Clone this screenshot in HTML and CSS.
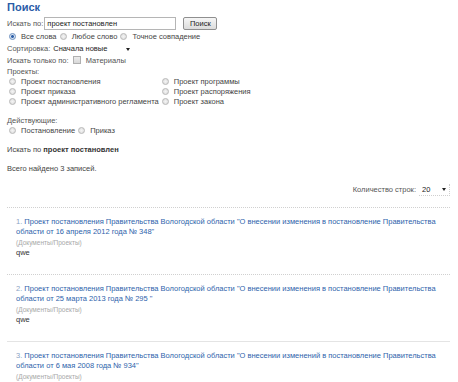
FILE: index.html
```html
<!DOCTYPE html>
<html lang="ru">
<head>
  <meta charset="UTF-8" />
  <title>Поиск</title>
  <link rel="stylesheet" href="styles.css">
</head>
<body>
  <div class="search-page">
    <h1>Поиск</h1>
    <form class="search-form">
      <div class="row first">
        <label class="label" for="q">Искать по:</label>
        <input type="text" id="q" class="query" value="проект постановлен" />
        <button type="button" class="btn">Поиск</button>
      </div>
      <div class="row radios">
        <label><input type="radio" name="mode" checked /> Все слова</label>
        <label><input type="radio" name="mode" /> Любое слово</label>
        <label><input type="radio" name="mode" /> Точное совпадение</label>
      </div>
      <div class="row">
        <span class="label">Сортировка:</span>
        <div class="select sort">Сначала новые <span class="arrow"></span></div>
      </div>
      <div class="row">
        <span class="label">Искать только по:</span>
        <label class="check"><input type="checkbox" /> Материалы</label>
      </div>
      <div class="label">Проекты:</div>
      <div class="projects">
        <label><input type="radio" name="proj" /> Проект постановления</label>
        <label><input type="radio" name="proj" /> Проект программы</label>
        <label><input type="radio" name="proj" /> Проект приказа</label>
        <label><input type="radio" name="proj" /> Проект распоряжения</label>
        <label><input type="radio" name="proj" /> Проект административного регламента</label>
        <label><input type="radio" name="proj" /> Проект закона</label>
      </div>
      <div class="label acting">Действующие:</div>
      <div class="row radios short">
        <label><input type="radio" name="act" /> Постановление</label>
        <label><input type="radio" name="act" /> Приказ</label>
      </div>
    </form>

    <p class="summary">Искать по <b>проект постановлен</b></p>
    <p class="summary">Всего найдено 3 записей.</p>

    <div class="per-page">
      <span>Количество строк:</span>
      <div class="select count">20 <span class="arrow"></span></div>
    </div>

    <ul class="results">
      <li>
        <span class="num">1.</span> <a href="#">Проект постановления Правительства Вологодской области "О внесении изменения в постановление Правительства области от 16 апреля 2012 года № 348"</a>
        <div class="section">(Документы/Проекты)</div>
        <div class="snippet">qwe</div>
      </li>
      <li>
        <span class="num">2.</span> <a href="#">Проект постановления Правительства Вологодской области "О внесении изменения в постановление Правительства области от 25 марта 2013 года № 295 "</a>
        <div class="section">(Документы/Проекты)</div>
        <div class="snippet">qwe</div>
      </li>
      <li>
        <span class="num">3.</span> <a href="#">Проект постановления Правительства Вологодской области "О внесении изменений в постановление Правительства области от 6 мая 2008 года № 934"</a>
        <div class="section">(Документы/Проекты)</div>
      </li>
    </ul>
  </div>
</body>
</html>
```

FILE: styles.css
```css
body {
  margin: 0;
  background-color: #ffffff;
  font-family: 'Liberation Sans', Arial, sans-serif;
  font-size: 7.5px;
  line-height: 10px;
  color: #444444;
}

.search-page {
  padding: 0 8px 0 7px;
}

h1 {
  margin: 0;
  font-size: 11px;
  line-height: 14px;
  font-weight: bold;
  color: #2a5ca8;
}

.search-form {
  margin-top: 2px;
}

.row {
  display: flex;
  align-items: center;
  height: 12px;
}

.row.first {
  height: 15px;
}

.row.short {
  height: 10px;
}

.label {
  color: #555555;
}

.query {
  width: 132px;
  height: 13px;
  box-sizing: border-box;
  margin: 0 7px 0 1px;
  padding: 0 2px;
  border: 1px solid #b5b5b5;
  font-family: inherit;
  font-size: 7.5px;
  color: #222222;
}

.btn {
  height: 13px;
  width: 34px;
  padding: 0;
  border: 1px solid #8f8f8f;
  border-radius: 2px;
  background: linear-gradient(#f6f6f6, #dcdcdc);
  font-family: inherit;
  font-size: 7.5px;
  color: #222222;
}

input[type="radio"] {
  appearance: none;
  width: 7px;
  height: 7px;
  margin: 0 3px 0 2px;
  border: 1px solid #b8b8b8;
  border-radius: 50%;
  background: radial-gradient(#f4f4f4, #dadada);
  vertical-align: -1px;
}

input[type="radio"]:checked {
  border-color: #6b8fc0;
  background: radial-gradient(#2d5fa8 35%, #d9e3f0 45%);
}

input[type="checkbox"] {
  appearance: none;
  width: 8px;
  height: 8px;
  margin: 0 3px 0 2px;
  border: 1px solid #b0b0b0;
  background: linear-gradient(#ececec, #d8d8d8);
  vertical-align: -1px;
}

.radios label {
  margin-right: 1px;
}

.select {
  position: relative;
  display: flex;
  align-items: center;
  height: 11px;
  color: #222222;
}

.sort {
  width: 80px;
  margin-left: 2px;
  padding-left: 1px;
}

.arrow {
  position: absolute;
  right: 3px;
  top: 4px;
  border-left: 2px solid transparent;
  border-right: 2px solid transparent;
  border-top: 3px solid #222222;
}

.check {
  margin-left: 2px;
  color: #555555;
}

.projects {
  display: grid;
  grid-template-columns: auto auto;
  justify-content: start;
  column-gap: 1px;
}

.projects label {
  white-space: nowrap;
}

.acting {
  margin-top: 9px;
}

.summary {
  margin: 9px 0 0 0;
  color: #444444;
}

.summary b {
  color: #333333;
}

.per-page {
  display: flex;
  justify-content: flex-end;
  align-items: center;
  margin-top: 10px;
  color: #555555;
}

.count {
  width: 27px;
  margin-left: 3px;
  padding-left: 3px;
  border-bottom: 1px dotted #cfcfcf;
  border-right: 1px dotted #cfcfcf;
}

.results {
  list-style: none;
  margin: 11px 0 0 0;
  padding: 0;
}

.results li {
  border-top: 1px dotted #d0d0d0;
  padding: 9px 0 16px 9px;
}

.results li:last-child {
  border-top: 1px solid #e4e4e4;
}

.num {
  color: #8aa2c4;
}

.results a {
  color: #2e63ab;
  text-decoration: none;
}

.section {
  color: #a8a8a8;
  font-size: 6.5px;
  line-height: 10px;
  margin-top: 1px;
}

.snippet {
  color: #333333;
}
```
